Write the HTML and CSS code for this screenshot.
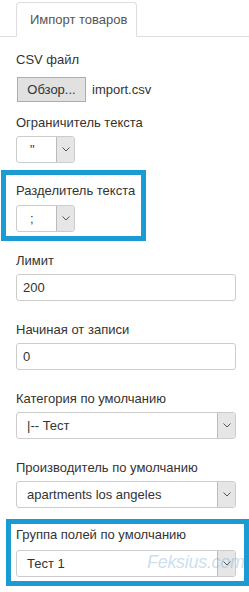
FILE: index.html
```html
<!DOCTYPE html>
<html lang="ru">
<head>
    <meta charset="UTF-8">
    <meta name="viewport" content="width=device-width, initial-scale=1.0">
    <title>Импорт товаров</title>
    <link rel="stylesheet" href="styles.css">
</head>
<body>

<div class="tabs">
    <div class="tab active">Импорт товаров</div>
</div>

<div class="form">
    <div class="field field-file">
        <label>CSV файл</label>
        <div class="file-row">
            <button class="browse-btn">Обзор...</button>
            <span class="file-name">import.csv</span>
        </div>
    </div>

    <div class="field">
        <label>Ограничитель текста</label>
        <div class="select small">
            <span class="select-value">"</span>
            <span class="select-arrow"><svg width="8" height="5" viewBox="0 0 8 5"><path d="M0.5 0.5 L4 4 L7.5 0.5" fill="none" stroke="#555" stroke-width="1"/></svg></span>
        </div>
    </div>

    <div class="field highlight hl-first">
        <label>Разделитель текста</label>
        <div class="select small">
            <span class="select-value">;</span>
            <span class="select-arrow"><svg width="8" height="5" viewBox="0 0 8 5"><path d="M0.5 0.5 L4 4 L7.5 0.5" fill="none" stroke="#555" stroke-width="1"/></svg></span>
        </div>
    </div>

    <div class="field">
        <label>Лимит</label>
        <input type="text" class="text-input" value="200">
    </div>

    <div class="field">
        <label>Начиная от записи</label>
        <input type="text" class="text-input" value="0">
    </div>

    <div class="field">
        <label>Категория по умолчанию</label>
        <div class="select wide">
            <span class="select-value">|-- Тест</span>
            <span class="select-arrow"><svg width="8" height="5" viewBox="0 0 8 5"><path d="M0.5 0.5 L4 4 L7.5 0.5" fill="none" stroke="#555" stroke-width="1"/></svg></span>
        </div>
    </div>

    <div class="field">
        <label>Производитель по умолчанию</label>
        <div class="select wide">
            <span class="select-value">apartments los angeles</span>
            <span class="select-arrow"><svg width="8" height="5" viewBox="0 0 8 5"><path d="M0.5 0.5 L4 4 L7.5 0.5" fill="none" stroke="#555" stroke-width="1"/></svg></span>
        </div>
    </div>

    <div class="field highlight hl-last">
        <label>Группа полей по умолчанию</label>
        <div class="select wide">
            <span class="select-value">Тест 1</span>
            <span class="select-arrow"><svg width="8" height="5" viewBox="0 0 8 5"><path d="M0.5 0.5 L4 4 L7.5 0.5" fill="none" stroke="#555" stroke-width="1"/></svg></span>
        </div>
        <span class="watermark">Feksius.com</span>
    </div>
</div>

</body>
</html>
```

FILE: styles.css
```css
body {
    margin: 0;
    font-family: "Liberation Sans", Arial, sans-serif;
    font-size: 13px;
    color: #333;
    background: #fff;
}
.tabs {
    display: flex;
    padding-top: 2px;
    padding-left: 16px;
    border-bottom: 1px solid #ddd;
    height: 37px;
    box-sizing: border-box;
}
.tab {
    width: 121px;
    box-sizing: border-box;
    border: 1px solid #ddd;
    border-bottom-color: #fff;
    border-radius: 4px 4px 0 0;
    margin-bottom: -1px;
    padding-left: 13px;
    line-height: 34px;
    color: #555;
    background: #fff;
}
.form {
    padding: 15px 0 0 16px;
}
label {
    display: block;
    line-height: 16px;
    margin-bottom: 5px;
}
.field {
    margin-bottom: 21px;
}
.field-file {
    margin-bottom: 13px;
}
.field-file label {
    margin-bottom: 9px;
}
.file-row {
    display: flex;
    align-items: center;
}
.browse-btn {
    width: 69px;
    height: 25px;
    margin-left: 1px;
    background: #e1e1e1;
    border: 1px solid #adadad;
    font-family: inherit;
    font-size: 13px;
    color: #333;
    padding: 0;
}
.file-name {
    margin-left: 6px;
}
.select {
    display: flex;
    height: 27px;
    box-sizing: border-box;
    border: 1px solid #ccc;
    border-radius: 3px;
    background: #fff;
    overflow: hidden;
}
.select.small {
    width: 59px;
}
.select.wide {
    width: 220px;
}
.select-value {
    flex: 1;
    line-height: 25px;
    padding-left: 10px;
    white-space: nowrap;
    overflow: hidden;
}
.select.small .select-value {
    padding-left: 13px;
}
.select-arrow {
    width: 17px;
    background: #e6e6e6;
    border-left: 1px solid #bbb;
    display: flex;
    align-items: center;
    justify-content: center;
}
.text-input {
    display: block;
    width: 220px;
    height: 27px;
    box-sizing: border-box;
    border: 1px solid #ccc;
    border-radius: 3px;
    padding: 0 6px;
    font-family: inherit;
    font-size: 13px;
    color: #333;
}
.highlight {
    border: 5px solid #1a9bd3;
    box-sizing: border-box;
}
.hl-first {
    margin-left: -15px;
    width: 145px;
    padding: 8px 0 4px 10px;
    margin-top: -14px;
    margin-bottom: 12px;
}
.hl-first label {
    margin-bottom: 6px;
}
.hl-last {
    position: relative;
    margin-left: -10px;
    width: 243px;
    padding: 3px 0 4px 5px;
    margin-top: -10px;
    margin-bottom: 0;
}
.hl-last label {
    margin-bottom: 7px;
}
.watermark {
    position: absolute;
    left: 136px;
    top: 28px;
    font-size: 18px;
    font-style: italic;
    color: rgba(120, 170, 215, 0.4);
    letter-spacing: -0.3px;
    white-space: nowrap;
    pointer-events: none;
}
```
